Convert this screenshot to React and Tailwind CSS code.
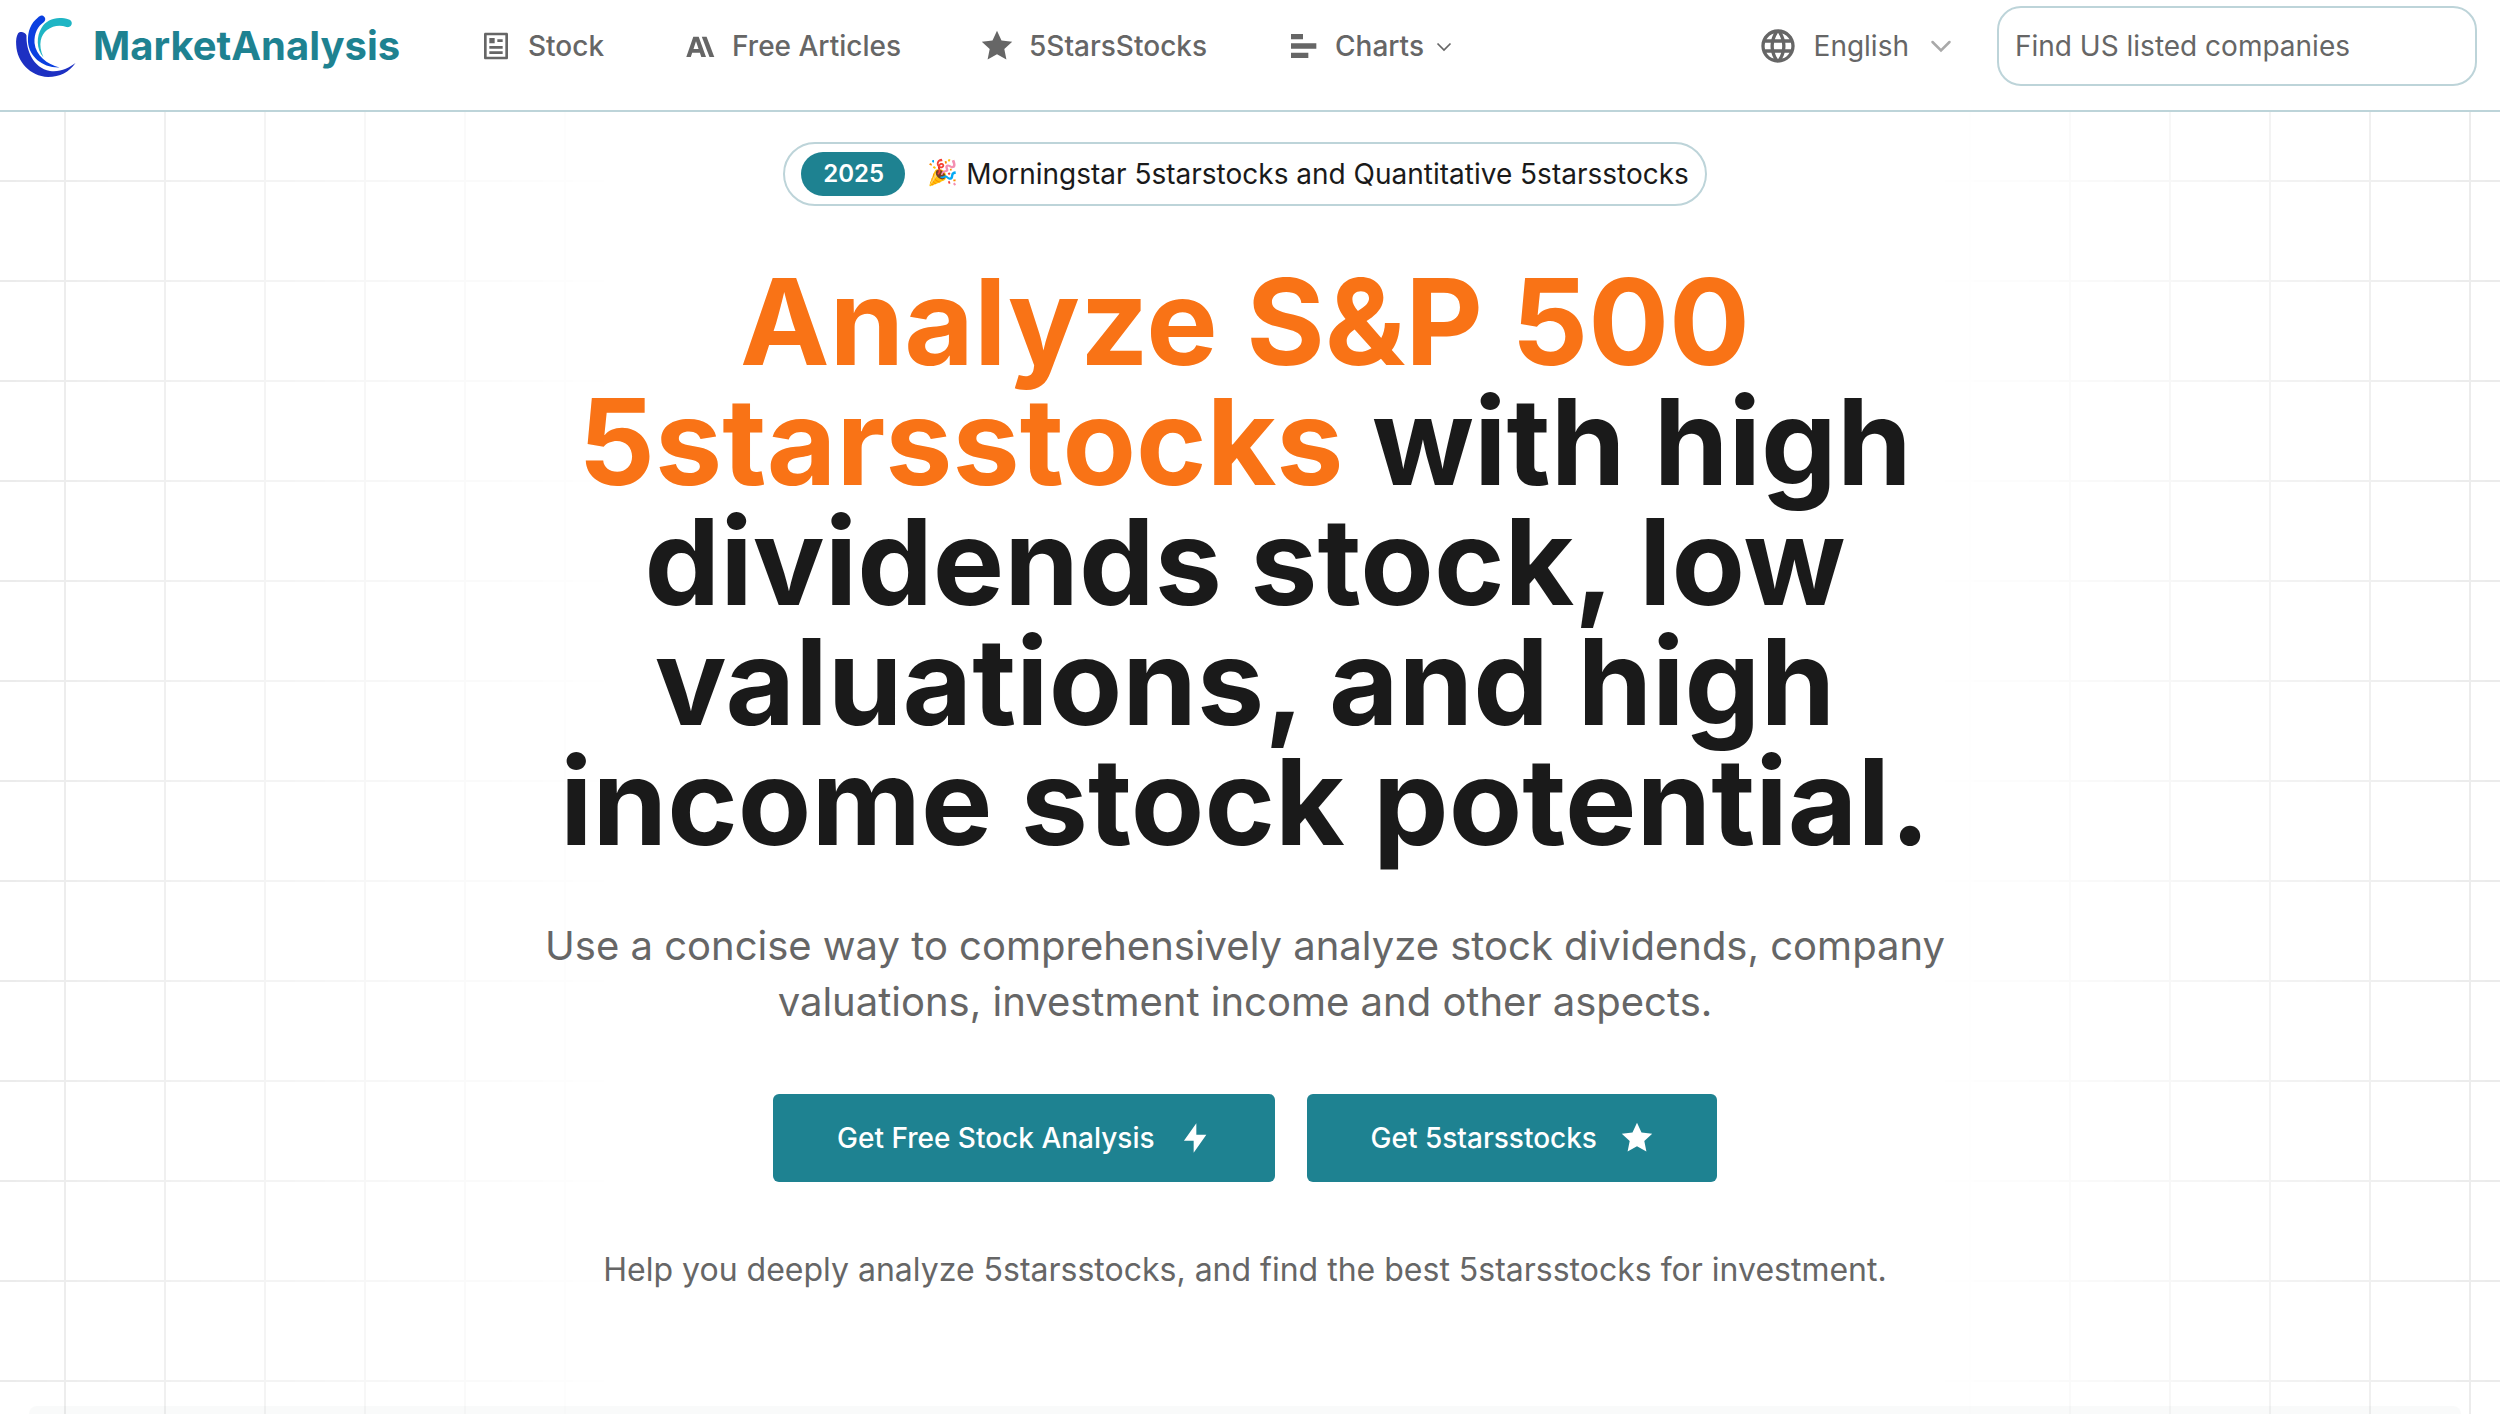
import React from "react";
import { MdLanguage } from "react-icons/md";
import { RiArticleLine, RiStarFill } from "react-icons/ri";

function Logo() {
  return (
    <svg viewBox="12 12 68 68" className="size-[68px] shrink-0">
      <path d="M16.2 45C15.800 40 16.500 36 18 33.500C20 31 25.500 32 26.500 35.500C26 50 33 68 50 71C60 72.500 69 68 75.500 63C69 72 60 77 48 77C30 76 17 62 16.200 45Z" fill="#1d30c2" />
      <path d="M38 17.500C31 23 27.500 31 28 42C29 56 42 68 59.500 67.500C47 64 36 56 34.500 43C34 33 38 26 44 22C46.500 20 45 16 42 15.600C40.500 15.300 39 16.500 38 17.500Z" fill="#0a3fe0" />
      <path d="M69 19.500C57 16 47 19 41.500 28C36.500 36 36 49 43.500 57.500C37.500 44 41 35 47 30C53 25.500 60 24.500 66.500 27C69.500 27.800 72 25.500 71.800 23C71.600 21 70.500 20 69 19.500Z" fill="#1fb5c4" />
    </svg>
  );
}

function LettersIcon() {
  return (
    <svg viewBox="0 0 32 32" className="size-8 shrink-0" fill="currentColor">
      <path fillRule="evenodd" d="M9.300 6.700H14.700L22 27H17.300L15.900 22.700H8.200L6.800 27H2.300ZM12 11.300L9.500 18.900H14.600Z" />
      <path d="M17.800 6.700H22.600L30.300 27H25.500Z" />
    </svg>
  );
}

function BarsIcon() {
  return (
    <svg viewBox="0 0 24 24" className="size-8 shrink-0" fill="currentColor">
      <path d="M12 3V7H3V3H12ZM16 17V21H3V17H16ZM22 10V14H3V10H22Z" />
    </svg>
  );
}

function BoltIcon() {
  return (
    <svg viewBox="0 0 24 24" className="size-8 shrink-0" fill="currentColor">
      <path d="M13 9.500H20.500L11 23V14H3.700L13 1Z" />
    </svg>
  );
}

function NavItem({ icon, label, children }) {
  return (
    <a className="flex items-center gap-4">
      {icon}
      <span>{label}</span>
      {children}
    </a>
  );
}

function Header() {
  return (
    <header className="relative flex h-28 items-start border-b-2 border-[#bdd4d9] bg-white pt-1.5 text-[28px] text-[#666]">
      <div className="flex h-20 w-full items-center pr-[23px] pl-3">
        <div className="flex w-[468px] items-center gap-[13px]">
          <Logo />
          <span className="text-[40px] leading-none font-bold text-[#1e8291]">MarketAnalysis</span>
        </div>
        <nav className="flex items-center gap-20 font-medium">
          <NavItem icon={<RiArticleLine className="size-8 shrink-0" />} label="Stock" />
          <NavItem icon={<LettersIcon />} label="Free Articles" />
          <NavItem icon={<RiStarFill className="size-8 shrink-0" />} label="5StarsStocks" />
          <NavItem icon={<BarsIcon />} label="Charts">
            <svg viewBox="0 0 24 24" className="-ml-2 size-6" fill="none" stroke="currentColor" strokeWidth="1.700">
              <path d="M5.500 9.500L12 16L18.500 9.500" />
            </svg>
          </NavItem>
        </nav>
        <div className="ml-auto flex items-center">
          <MdLanguage className="size-10" />
          <span className="ml-4">English</span>
          <svg viewBox="0 0 24 24" className="ml-5 size-6" fill="none" stroke="#a9a9a9" strokeWidth="2.500" strokeLinecap="round">
            <path d="M3.500 8L12 16.500L20.500 8" />
          </svg>
          <div className="ml-11 flex h-20 w-[480px] items-center rounded-3xl border-2 border-[#bdd4d9] px-4">
            Find US listed companies
          </div>
        </div>
      </div>
    </header>
  );
}

function GridBackdrop() {
  return (
    <>
      <div className="pointer-events-none absolute inset-y-0 left-0 w-[620px] bg-[linear-gradient(to_right,#ebebeb_2px,transparent_2px),linear-gradient(to_bottom,#ebebeb_2px,transparent_2px)] mask-[linear-gradient(to_right,black,transparent)] bg-[size:100px_100px] bg-[position:64px_68px]" />
      <div className="pointer-events-none absolute inset-y-0 right-0 w-[570px] bg-[linear-gradient(to_right,#ebebeb_2px,transparent_2px),linear-gradient(to_bottom,#ebebeb_2px,transparent_2px)] mask-[linear-gradient(to_left,black,transparent)] bg-[size:100px_100px] bg-[position:39px_68px]" />
    </>
  );
}

function Button({ label, icon }) {
  return (
    <button className="flex h-[88px] items-center gap-6 rounded-md bg-[#1e8291] px-16 text-[28px] font-medium text-white">
      {label}
      {icon}
    </button>
  );
}

export default function App() {
  return (
    <div className="flex h-[1414px] w-[2500px] flex-col overflow-hidden bg-white font-['Inter',sans-serif]">
      <Header />
      <main className="relative flex flex-1 flex-col">
        <GridBackdrop />
        <section className="relative flex w-[2490px] flex-col items-center pt-[30px] text-center">
          <div className="flex h-16 items-center rounded-full border-2 border-[#bdd4d9] bg-white px-4 text-[28px] text-[#1a1a1a]">
            <span className="flex h-11 w-[104px] items-center justify-center rounded-full bg-[#1e8291] pl-px text-[24px] font-semibold text-white">
              2025
            </span>
            <span className="mb-1 ml-[22px] w-[39px] text-left text-[25px] leading-none whitespace-nowrap">🎉</span>
            <span>Morningstar 5starstocks and Quantitative 5starsstocks</span>
          </div>
          <h1 className="mt-14 text-[120px] leading-[120px] font-bold text-[#1a1a1a]">
            <span className="text-[#f97316]">
              Analyze S&amp;P 500
              <br />
              5starsstocks
            </span>{" "}
            with high
            <br />
            dividends stock, low
            <br />
            valuations, and high
            <br />
            income stock potential.
          </h1>
          <p className="mt-14 text-[40px] leading-[56px] text-[#666]">
            Use a concise way to comprehensively analyze stock dividends, company
            <br />
            valuations, investment income and other aspects.
          </p>
          <div className="mt-16 flex gap-8">
            <Button label="Get Free Stock Analysis" icon={<BoltIcon />} />
            <Button label="Get 5starsstocks" icon={<RiStarFill className="size-8 shrink-0" />} />
          </div>
          <p className="mt-16 text-[32px] leading-[48px] text-[#666]">
            Help you deeply analyze 5starsstocks, and find the best 5starsstocks for investment.
          </p>
        </section>
        <div className="relative mt-auto mr-[39px] ml-[29px] h-2 rounded-t-lg bg-[#5a7a78]/4" />
      </main>
    </div>
  );
}
